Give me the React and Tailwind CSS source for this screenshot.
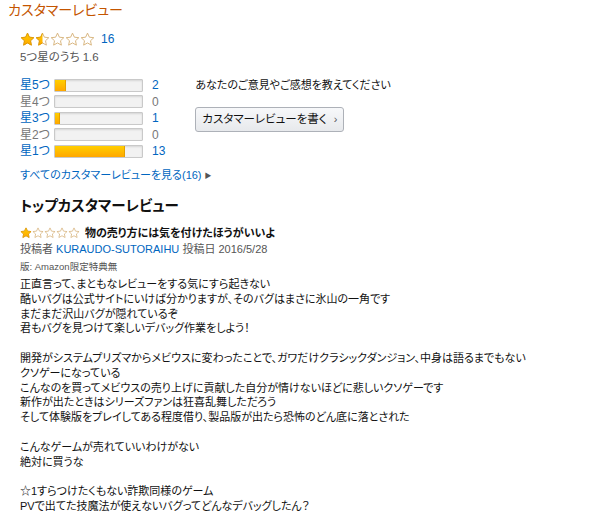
import React from 'react';

const STAR = 'M12 1.8l3 6.5 7.1.8-5.3 4.9 1.4 7L12 17.5 5.8 21l1.4-7L1.9 9.1 9 8.3z';

function Star({ fill = 0, size = 14, id }) {
  // fill: 0 empty, 0.5 half, 1 full
  return (
    <svg width={size} height={size} viewBox="0 0 24 24">
      <defs>
        <linearGradient id={`g-${id}`} x1="0" y1="0" x2="0" y2="1">
          <stop offset="0" stopColor="#ffce00" />
          <stop offset="1" stopColor="#ffa700" />
        </linearGradient>
        <clipPath id={`c-${id}`}>
          <rect x="0" y="0" width={24 * fill} height="24" />
        </clipPath>
      </defs>
      <path d={STAR} fill="#fff" stroke="#d6b27a" strokeWidth="1.5" strokeLinejoin="round" />
      {fill > 0 && (
        <path d={STAR} fill={`url(#g-${id})`} stroke="#e19a00" strokeWidth="1.5" strokeLinejoin="round" clipPath={`url(#c-${id})`} />
      )}
    </svg>
  );
}

function Stars({ value, size, prefix }) {
  return (
    <div className="flex items-center">
      {[0, 1, 2, 3, 4].map((i) => {
        const f = value >= i + 1 ? 1 : value > i ? 0.5 : 0;
        return <Star key={i} fill={f} size={size} id={`${prefix}${i}`} />;
      })}
    </div>
  );
}

const rows = [
  { label: '星5つ', count: 2, pct: 12.5, link: true },
  { label: '星4つ', count: 0, pct: 0, link: false },
  { label: '星3つ', count: 1, pct: 6, link: true },
  { label: '星2つ', count: 0, pct: 0, link: false },
  { label: '星1つ', count: 13, pct: 81, link: true },
];

const body = [
  '正直言って、まともなレビューをする気にすら起きない',
  '酷いバグは公式サイトにいけば分かりますが、そのバグはまさに氷山の一角です',
  'まだまだ沢山バグが隠れているぞ',
  '君もバグを見つけて楽しいデバッグ作業をしよう！',
  '',
  '開発がシステムプリズマからメビウスに変わったことで、ガワだけクラシックダンジョン、中身は語るまでもない',
  'クソゲーになっている',
  'こんなのを買ってメビウスの売り上げに貢献した自分が情けないほどに悲しいクソゲーです',
  '新作が出たときはシリーズファンは狂喜乱舞しただろう',
  'そして体験版をプレイしてある程度借り、製品版が出たら恐怖のどん底に落とされた',
  '',
  'こんなゲームが売れていいわけがない',
  '絶対に買うな',
  '',
  '☆1すらつけたくもない詐欺同様のゲーム',
  'PVで出てた技魔法が使えないバグってどんなデバッグしたん？',
];

export default function App() {
  return (
    <div
      className="w-[600px] h-[514px] overflow-hidden bg-white text-[#111] pl-[8px] [font-feature-settings:'palt']"
      style={{ fontFamily: '"Liberation Sans", "Noto Sans CJK JP", sans-serif' }}
    >
      <div className="text-[14px] leading-[20px] text-[#c45500]">カスタマーレビュー</div>

      <div className="pl-[12px] mt-[10px] flex items-center gap-[6px]">
        <Stars value={1.6} size={15} prefix="a" />
        <span className="text-[12px] text-[#0066c0]">16</span>
      </div>
      <div className="pl-[12px] text-[11.5px] leading-[16px] text-[#555] mt-[1px]">5つ星のうち 1.6</div>

      <div className="flex pl-[12px] mt-[12px]">
        <div className="flex flex-col gap-[4.5px] pt-[2px]">
          {rows.map((r) => (
            <div key={r.label} className="flex items-center h-[12px]">
              <span className={`w-[34px] text-[12px] ${r.link ? 'text-[#0066c0]' : 'text-[#777]'}`}>{r.label}</span>
              <div className="w-[89px] h-[13px] bg-[#f2f2f2] border border-[#c9c9c9] rounded-[1px] shadow-[inset_0_1px_2px_rgba(0,0,0,0.12)] overflow-hidden">
                {r.pct > 0 && (
                  <div
                    className="h-full bg-gradient-to-b from-[#ffce00] to-[#ffa700] border-r border-[#e3a000]"
                    style={{ width: `${r.pct}%` }}
                  />
                )}
              </div>
              <span className={`ml-[9px] text-[12px] ${r.count > 0 ? 'text-[#0066c0]' : 'text-[#777]'}`}>{r.count}</span>
            </div>
          ))}
        </div>
        <div className="ml-[30px]">
          <div className="text-[11px] leading-[16px] text-[#111] whitespace-nowrap">あなたのご意見やご感想を教えてください</div>
          <button className="mt-[14px] h-[25px] w-[149px] border border-[#adb1b8] rounded-[3px] bg-gradient-to-b from-[#f7f8fa] to-[#e7e9ec] text-[11.5px] text-[#111] flex items-center justify-center gap-[7px] whitespace-nowrap">
            <span>カスタマーレビューを書く</span>
            <span className="text-[11px] text-[#555]">›</span>
          </button>
        </div>
      </div>

      <div className="pl-[12px] mt-[10px] text-[11px] leading-[16px] text-[#0066c0]">
        すべてのカスタマーレビューを見る(16)<span className="text-[7px] ml-[3px] text-[#555] align-[1px]">▶</span>
      </div>

      <div className="pl-[12px] mt-[12px] text-[14.5px] leading-[20px] font-bold text-[#111]">トップカスタマーレビュー</div>

      <div className="pl-[12px] mt-[9px] flex items-center gap-[5px]">
        <Stars value={1} size={12} prefix="b" />
        <span className="text-[11px] font-bold leading-[16px]">物の売り方には気を付けたほうがいいよ</span>
      </div>
      <div className="pl-[12px] text-[11px] leading-[16px] text-[#555]">
        投稿者 <span className="text-[#0066c0]">KURAUDO-SUTORAIHU</span> 投稿日 2016/5/28
      </div>
      <div className="pl-[12px] mt-[3px] text-[9.5px] leading-[14px] text-[#555]">版: Amazon限定特典無</div>
      <div className="pl-[12px] mt-[3px] text-[11px] leading-[14.8px] text-[#111]">
        {body.map((l, i) => (
          <div key={i} className="h-[14.8px] whitespace-nowrap">{l}</div>
        ))}
      </div>
    </div>
  );
}
